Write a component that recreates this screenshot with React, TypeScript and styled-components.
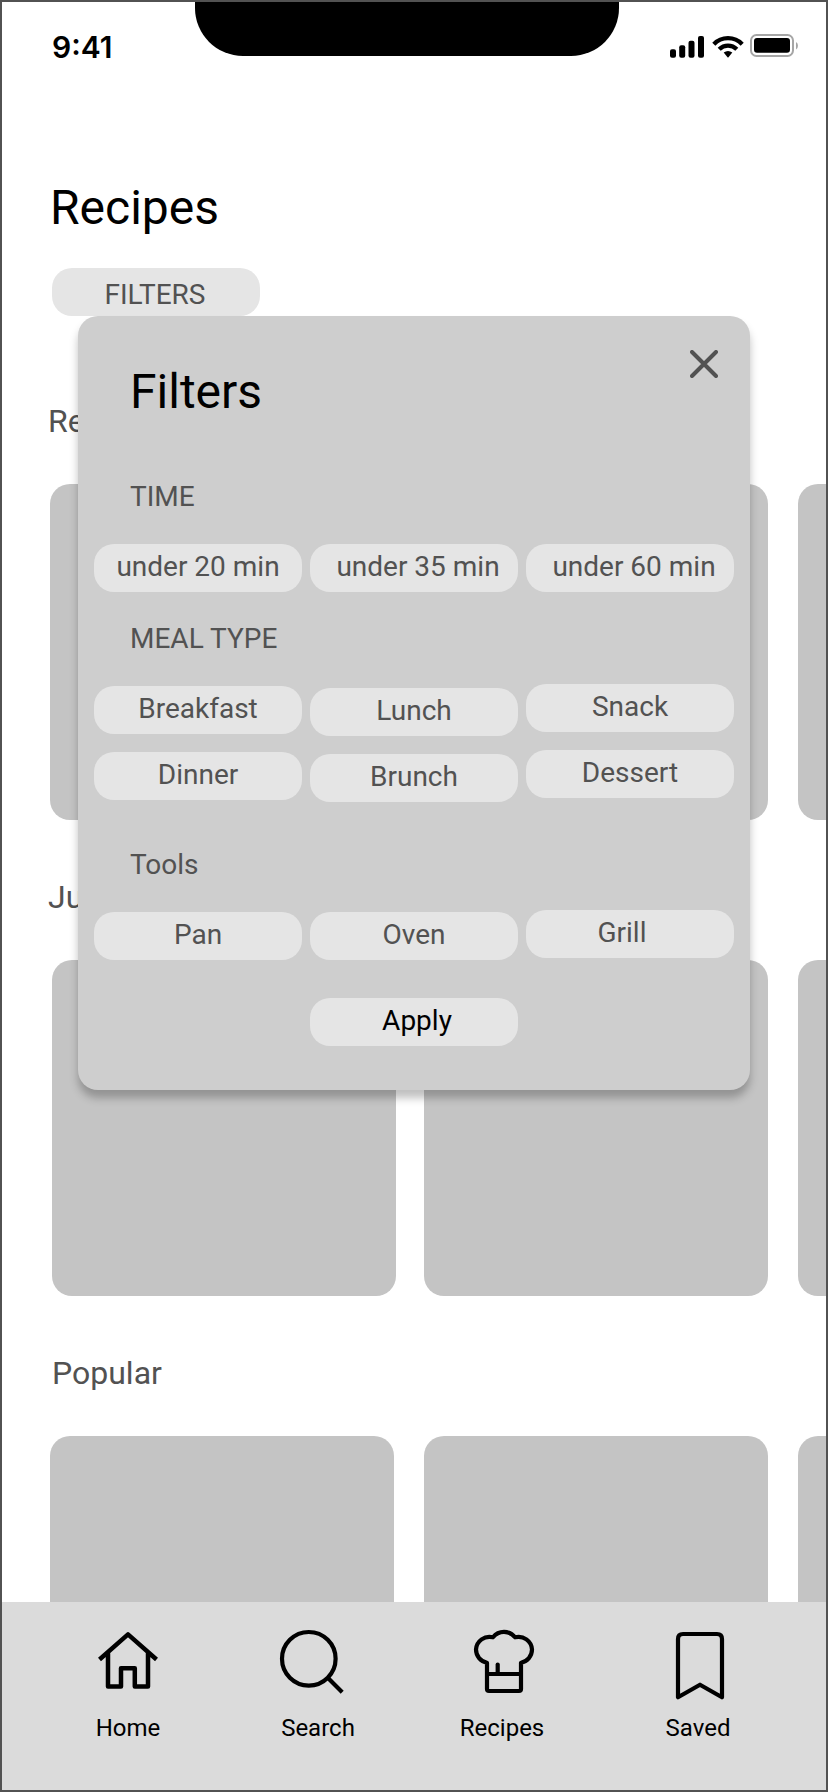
import React from "react";
import styled, { createGlobalStyle } from "styled-components";

const GlobalStyle = createGlobalStyle`
  * { box-sizing: border-box; }
  body { margin: 0; background: #fff; font-family: Roboto, "Liberation Sans", sans-serif; }
  h1, h2, h3, p { margin: 0; font-weight: 400; }
  button { font: inherit; border: 0; padding: 0; background: none; }
  svg { display: block; }
`;

const Screen = styled.div`
  position: relative;
  display: flex;
  flex-direction: column;
  width: 828px;
  height: 1792px;
  border: 2px solid #525252;
  background: #fff;
  overflow: hidden;
`;

const StatusBar = styled.header`
  display: grid;
  grid-template-columns: 193px 424px 1fr;
  grid-template-rows: 54px;
  flex: none;
  height: 54px;
`;

const Clock = styled.span`
  padding: 27px 0 0 50px;
  font: 600 30px/36px Inter, sans-serif;
  color: #000;
`;

const Notch = styled.div`
  background: #000;
  border-radius: 0 0 48px 48px;
`;

const StatusIcons = styled.div`
  padding: 31px 0 0 51px;
`;

const Content = styled.main`
  flex: 1;
  min-height: 0;
  overflow: hidden;
  padding-top: 124px;
`;

const PageTitle = styled.h1`
  padding-left: 48px;
  font-size: 48px;
  line-height: 56px;
  color: #000;
`;

const Chip = styled.button<{ $drop?: number; $shift?: number; $strong?: boolean }>`
  display: block;
  width: 208px;
  height: 48px;
  margin-top: ${(p) => p.$drop ?? 0}px;
  padding-bottom: 2px;
  border-radius: 20px;
  background: #e5e5e5;
  color: ${(p) => (p.$strong ? "#000" : "#525252")};
  font-size: 28px;
  line-height: 32px;
  text-align: center;
  text-indent: ${(p) => (p.$shift ?? 0) * 2}px;
  white-space: nowrap;
`;

const FilterButton = styled(Chip)`
  margin: 32px 0 28px 50px;
  padding: 6px 0 0;
`;

const Section = styled.section`
  padding-top: 58px;
`;

const SectionTitle = styled.h2<{ $inset: number }>`
  padding-left: ${(p) => p.$inset}px;
  font-size: 32px;
  line-height: 38px;
  color: #525252;
`;

const CardRow = styled.div<{ $inset: number }>`
  display: grid;
  grid-template-columns: ${(p) => 422 - p.$inset}px 374px 344px;
  margin: 44px 0 0 ${(p) => p.$inset}px;
`;

const Card = styled.div`
  width: 344px;
  height: 336px;
  border-radius: 20px;
  background: #c4c4c4;
`;

const Dialog = styled.div`
  position: absolute;
  top: 314px;
  left: 76px;
  width: 672px;
  height: 774px;
  padding: 34px 16px 0;
  border-radius: 20px;
  background: #cecece;
  box-shadow: 0 8px 8px rgba(0, 0, 0, 0.25);
`;

const DialogHeader = styled.div`
  display: flex;
  justify-content: space-between;
  align-items: flex-start;
  padding: 0 16px 0 36px;
`;

const DialogTitle = styled.h2`
  margin-top: 14px;
  font-size: 48px;
  line-height: 56px;
  color: #000;
`;

const GroupTitle = styled.h3<{ $before: number }>`
  margin-top: ${(p) => p.$before}px;
  padding-left: 36px;
  font-size: 28px;
  line-height: 32px;
  color: #525252;
`;

const ChipGrid = styled.div<{ $before: number }>`
  display: grid;
  grid-template-columns: repeat(3, 208px);
  align-items: start;
  column-gap: 8px;
  row-gap: 14px;
  margin-top: ${(p) => p.$before}px;
`;

const DialogActions = styled.div`
  display: flex;
  justify-content: center;
  margin-top: 38px;
`;

const TabBar = styled.nav`
  display: flex;
  flex: none;
  height: 188px;
  padding: 22px 0 0 56px;
  background: #dbdbdb;
`;

const Tab = styled.a<{ $gap?: number }>`
  display: flex;
  flex-direction: column;
  align-items: center;
  width: 140px;
  margin-left: ${(p) => p.$gap ?? 0}px;
  color: #000;
  font-size: 24px;
  line-height: 28px;
`;

const TabIcon = styled.svg<{ $weight?: number }>`
  width: 80px;
  height: 80px;
  margin-bottom: 10px;
  fill: none;
  stroke: #000;
  stroke-width: ${(p) => p.$weight ?? 4.2};
  stroke-linejoin: round;
`;

type ChipData = { label: string; drop?: number; shift?: number };

const times: ChipData[] = [
  { label: "under 20 min" },
  { label: "under 35 min", shift: 4 },
  { label: "under 60 min", shift: 4 },
];

const meals: ChipData[] = [
  { label: "Breakfast", drop: 2 },
  { label: "Lunch", drop: 4 },
  { label: "Snack" },
  { label: "Dinner", drop: 2 },
  { label: "Brunch", drop: 4 },
  { label: "Dessert" },
];

const tools: ChipData[] = [
  { label: "Pan", drop: 2 },
  { label: "Oven", drop: 2 },
  { label: "Grill", shift: -8 },
];

function Chips({ items, before }: { items: ChipData[]; before: number }) {
  return (
    <ChipGrid $before={before}>
      {items.map((c) => (
        <Chip key={c.label} $drop={c.drop} $shift={c.shift}>
          {c.label}
        </Chip>
      ))}
    </ChipGrid>
  );
}

function RecipeSection({ title, titleInset, inset }: { title: string; titleInset: number; inset: number }) {
  return (
    <Section>
      <SectionTitle $inset={titleInset}>{title}</SectionTitle>
      <CardRow $inset={inset}>
        <Card />
        <Card />
        <Card />
      </CardRow>
    </Section>
  );
}

export default function App() {
  return (
    <>
      <GlobalStyle />
      <Screen>
        <StatusBar>
          <Clock>9:41</Clock>
          <Notch />
          <StatusIcons>
            <svg width="130" height="26" viewBox="0 0 130 26" fill="none">
              <g fill="#000">
                <rect x="0" y="16.3" width="6" height="8.4" rx="2" />
                <rect x="9.2" y="12.2" width="6" height="12.5" rx="2" />
                <rect x="18.5" y="7.7" width="6" height="17" rx="2" />
                <rect x="28" y="3" width="6" height="21.7" rx="2" />
                <path d="M53.7 19.6a7 7 0 0 1 8.6 0l-3.8 4.7q-.5.6-1 0z" />
              </g>
              <g stroke="#000" strokeWidth="4.3">
                <path d="M43.8 11.2A19.8 19.8 0 0 1 72.2 11.2" />
                <path d="M49.2 16.3A12.4 12.4 0 0 1 66.8 16.3" />
              </g>
              <rect x="81" y="2" width="42" height="21" rx="5.5" stroke="#a6a6a6" strokeWidth="2" />
              <rect x="84" y="5" width="36" height="14.8" rx="3" fill="#000" />
              <path d="M126 9v7.5q2-1.2 2-3.75T126 9z" fill="#a6a6a6" />
            </svg>
          </StatusIcons>
        </StatusBar>

        <Content>
          <PageTitle>Recipes</PageTitle>
          <FilterButton $shift={-1}>FILTERS</FilterButton>
          <RecipeSection title="Re" titleInset={46} inset={48} />
          <RecipeSection title="Ju" titleInset={46} inset={50} />
          <RecipeSection title="Popular" titleInset={50} inset={48} />
        </Content>

        <TabBar>
          <Tab>
            <TabIcon viewBox="0 0 80 80" $weight={4.5}>
              <path d="M11.5 35.5 40 10.4 68.5 35.5M20 29v33.4h13V44.3h13.8v18.1H60V29" />
            </TabIcon>
            Home
          </Tab>
          <Tab $gap={50}>
            <TabIcon viewBox="0 0 80 80">
              <circle cx="30.8" cy="34.8" r="26.8" />
              <path d="M50 54 64.2 68.2" />
            </TabIcon>
            Search
          </Tab>
          <Tab $gap={44}>
            <TabIcon viewBox="0 0 80 80">
              <path d="M25 38.7A13.3 13.3 0 0 1 14 25.5 13.5 13.5 0 0 1 31 13.3 14 14 0 0 1 53 13.3 13.5 13.5 0 0 1 70 25.5 13.3 13.3 0 0 1 59 38.7V65q0 2-2 2H27q-2 0-2-2zM25 50h34" />
              <path d="M35.7 50V40.5" strokeLinecap="round" />
            </TabIcon>
            Recipes
          </Tab>
          <Tab $gap={56}>
            <TabIcon viewBox="0 0 80 80">
              <path d="M20 73.3V15q0-5 5-5h34q5 0 5 5v58.3L42 60.7z" />
            </TabIcon>
            Saved
          </Tab>
        </TabBar>

        <Dialog role="dialog">
          <DialogHeader>
            <DialogTitle>Filters</DialogTitle>
            <button>
              <svg width="28" height="28" viewBox="0 0 28 28" stroke="#525252" strokeWidth="4" strokeLinecap="round">
                <path d="M2 2 26 26M26 2 2 26" />
              </svg>
            </button>
          </DialogHeader>
          <GroupTitle $before={61}>TIME</GroupTitle>
          <Chips items={times} before={31} />
          <GroupTitle $before={31}>MEAL TYPE</GroupTitle>
          <Chips items={meals} before={29} />
          <GroupTitle $before={47}>Tools</GroupTitle>
          <Chips items={tools} before={29} />
          <DialogActions>
            <Chip $shift={3} $strong>
              Apply
            </Chip>
          </DialogActions>
        </Dialog>
      </Screen>
    </>
  );
}
